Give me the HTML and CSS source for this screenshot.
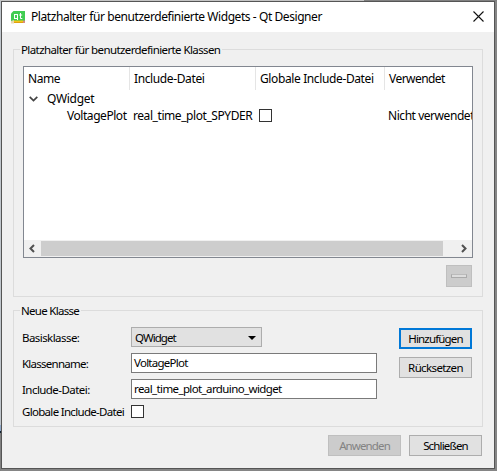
FILE: index.html
```html
<!DOCTYPE html>
<html lang="de">
<head>
<meta charset="utf-8">
<title>Qt Designer</title>
<link rel="stylesheet" href="styles.css">
</head>
<body>
<main class="dialog">
  <header class="titlebar">
    <svg class="logo" width="15" height="14" viewBox="0 0 15 14">
      <path d="M2.5 0H14v11H0V2.5z" fill="#41cd52"/>
      <g fill="none" stroke="#fff" stroke-width="1"><rect x="3.5" y="3.5" width="3" height="4"/><path d="M6.5 7v2M9.5 2v5.5h1.8M8.2 4h3"/></g>
      <path d="M0 10l3-1v3.5H0z" fill="#ead9b0"/><path d="M3 9.5h9V12H3z" fill="#f5c518"/><path d="M3 11h9v1H3z" fill="#e0a010"/><path d="M12 9.5h2V12h-2z" fill="#d88a80"/>
    </svg>
    <h1 class="title">Platzhalter für benutzerdefinierte Widgets - Qt Designer</h1>
    <svg class="close" width="11" height="11" viewBox="0 0 11 11"><path d="M.5.5l10 10M10.5.5l-10 10" stroke="#111" stroke-width="1.1"/></svg>
  </header>

  <section class="group group-classes">
    <h2 class="legend"><span class="t-classes">Platzhalter für benutzerdefinierte Klassen</span></h2>
    <div class="tree">
      <div class="row head">
        <span class="cell c1"><span class="t-name">Name</span></span><span class="cell c2"><span class="t-inc">Include-Datei</span></span><span class="cell c3"><span class="t-glob">Globale Include-Datei</span></span><span class="cell c4"><span class="t-used">Verwendet</span></span>
      </div>
      <div class="row parent">
        <svg width="9" height="6" viewBox="0 0 9 6"><path d="M.7.8l3.8 3.8L8.3.8" fill="none" stroke="#444" stroke-width="1.7"/></svg>
        <span class="t-qw">QWidget</span>
      </div>
      <div class="row child">
        <span class="d1"><span class="t-vp">VoltagePlot</span></span><span class="d2"><span class="t-spy">real_time_plot_SPYDER</span></span><span class="d3"><i class="check"></i></span><span class="d4"><span class="t-not">Nicht verwendet</span></span>
      </div>
      <div class="scrollbar">
        <svg width="17" height="15" viewBox="0 0 17 15"><path d="M10 4L6.500 7.500l3.500 3.500" fill="none" stroke="#505050" stroke-width="2"/></svg>
        <i class="thumb"></i>
        <svg class="right" width="17" height="15" viewBox="0 0 17 15"><path d="M7 4l3.500 3.500-3.500 3.500" fill="none" stroke="#505050" stroke-width="2"/></svg>
      </div>
    </div>
    <div class="remove"><i class="minus"></i></div>
  </section>

  <section class="group group-new">
    <h2 class="legend"><span class="t-new">Neue Klasse</span></h2>
    <div class="form">
      <div class="fields">
        <label class="r1"><span class="t-basis">Basisklasse:</span></label>
        <div class="combo"><span class="t-qwc">QWidget</span><svg width="8" height="4" viewBox="0 0 8 4"><path d="M0 0h8L4 4z"/></svg></div>
        <label class="r2"><span class="t-kn">Klassenname:</span></label>
        <div class="input in2"><span class="t-vpi">VoltagePlot</span></div>
        <label class="r3"><span class="t-id">Include-Datei:</span></label>
        <div class="input in3"><span class="t-ard">real_time_plot_arduino_widget</span></div>
        <label class="r4"><span class="t-gi">Globale Include-Datei</span></label>
        <i class="check in4"></i>
      </div>
      <div class="actions">
        <div class="button primary"><span class="t-add">Hinzufügen</span></div>
        <div class="button"><span class="t-reset">Rücksetzen</span></div>
      </div>
    </div>
  </section>

  <footer class="footer">
    <div class="button disabled"><span class="t-apply">Anwenden</span></div>
    <div class="button"><span class="t-quit">Schließen</span></div>
  </footer>
</main>
</body>
</html>
```
FILE: styles.css
```css
* { box-sizing: border-box; }
body {
  margin: 0;
  width: 497px;
  height: 471px;
  padding: 1px 2px 2px 1px;
  overflow: hidden;
  background: linear-gradient(90deg, #c4c4c4 0 364px, #808080 364px) 0 0 / 100% 1px no-repeat,
    linear-gradient(#c0c6cc 0 425px, #8fa8c8 425px 431px, #123 431px 433px, #808080 433px) 0 0 / 1px 100% no-repeat,
    #858585;
  font: 12px/16px "Noto Sans", "Open Sans", sans-serif;
  color: #000;
  white-space: nowrap;
}
h1, h2 { margin: 0; font: inherit; }
i { display: block; }
svg { display: block; flex: none; }
.dialog {
  width: 494px;
  height: 468px;
  border: 1px solid #555;
  background: #f0f0f0;
}
.titlebar {
  display: flex;
  height: 30px;
  padding: 0 10px 0 9px;
  background: #fff;
}
.logo { margin-top: 9px; }
.title { margin: 7px 0 0 5px; letter-spacing: -0.43px; }
.close { margin: 9px 0 0 auto; }
.group {
  width: 470px;
  margin-left: 11px;
  border: 1px solid #dcdcdc;
}
.group-classes { height: 248px; margin-top: 17px; padding: 0 9px; }
.group-new { height: 117px; margin-top: 13px; padding: 0 7px; }
.legend {
  width: max-content;
  height: 16px;
  margin-top: -8px;
  padding: 0 2px 0 1px;
  background: #f0f0f0;
}
.group-classes .legend { margin-left: -3px; }
.group-new .legend { margin-left: -1px; }
.tree {
  display: flex;
  flex-direction: column;
  width: 450px;
  height: 192px;
  margin-top: 8px;
  border: 1px solid #828790;
  background: #fff;
  overflow: hidden;
}
.row { display: flex; flex: none; overflow: hidden; }
.head { height: 23px; }
.cell { flex: none; height: 23px; padding: 4px 0 0 4px; border-right: 1px solid #e5e5e5; }
.c1 { width: 106px; }
.c2 { width: 126px; padding-left: 4px; }
.c3 { width: 129px; }
.c4 { width: 87px; border: 0; }
.parent { height: 17px; padding-left: 5px; }
.parent svg { margin-top: 6px; }
.parent span { margin-left: 9px; margin-top: 1px; }
.child { height: 17px; padding-left: 43px; line-height: 17px; }
.d1 { width: 66px; }
.d2 { width: 126px; }
.d3 { width: 129px; padding-top: 2px; }
.child > span { flex: none; }
.check { width: 13px; height: 13px; border: 1px solid #333; background: #fff; }
.scrollbar { display: flex; height: 17px; padding: 1px 0; margin-top: auto; background: #f0f0f0; }
.thumb { width: 402px; height: 15px; background: #cdcdcd; }
.right { margin-left: auto; }
.remove {
  width: 26px;
  height: 22px;
  margin: 7px 0 0 423px;
  padding: 8px 4px;
  border: 1px solid #bfbfbf;
  background: #ccc;
}
.minus { height: 4px; border: 1px solid #aaa; border-top-color: #bbb; background: #ddd; }
.form { display: flex; justify-content: space-between; padding: 8px 3px 0 1px; }
.fields {
  display: grid;
  grid-template-columns: 109px 246px;
  grid-template-rows: 26px 26px 23px 16px;
}
.fields label { padding-top: 3px; }
.fields .r4 { padding-top: 2px; }
.combo {
  display: flex;
  justify-content: space-between;
  width: 131px;
  height: 20px;
  padding: 2px 5px 0 3px;
  border: 1px solid #adadad;
  background: #e1e1e1;
}
.combo svg { margin-top: 6px; }
.input { height: 20px; padding: 1px 2px; border: 1px solid #7a7a7a; background: #fff; }
.in4 { margin-top: 3px; }
.actions { display: grid; align-content: start; gap: 8px; padding-top: 1px; }
.button {
  display: flex;
  justify-content: center;
  width: 73px;
  height: 21px;
  padding-top: 2px;
  border: 1px solid #adadad;
  background: #e1e1e1;
}
.primary { padding-top: 1px; border: 2px solid #0078d7; }
.disabled { border-color: #bfbfbf; background: #ccc; color: #838383; }
.footer { display: flex; justify-content: flex-end; gap: 8px; margin: 8px 12px 0 0; }

.legend, .fields, .button { font-size: 11.5px; }
.t-classes { letter-spacing: -0.6px; }
.t-name { letter-spacing: -0.4px; }
.t-inc { letter-spacing: -0.38px; }
.t-glob { letter-spacing: -0.38px; }
.t-used { letter-spacing: -0.55px; }
.t-qw { letter-spacing: -0.3px; }
.t-vp { letter-spacing: -0.45px; }
.t-spy { letter-spacing: -0.43px; }
.t-not { letter-spacing: -0.45px; }
.t-new { letter-spacing: -0.7px; }
.t-basis { letter-spacing: -0.56px; }
.t-kn { letter-spacing: -0.75px; }
.t-id { letter-spacing: -0.55px; }
.t-gi { letter-spacing: -0.69px; }
.t-qwc { letter-spacing: -0.95px; }
.t-vpi { letter-spacing: -0.75px; }
.t-ard { letter-spacing: -0.61px; }
.t-add { letter-spacing: -0.85px; }
.t-reset { letter-spacing: -0.63px; }
.t-apply { letter-spacing: -0.88px; }
.t-quit { letter-spacing: -0.83px; }
```
